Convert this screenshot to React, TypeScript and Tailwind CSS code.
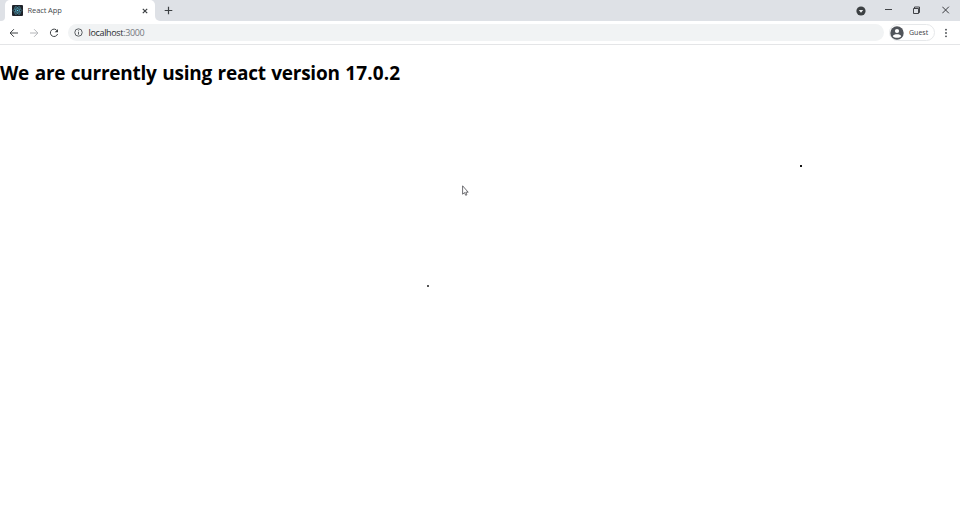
import type { ReactNode } from "react";

function Glyph({ className, size, children }: { className?: string; size: number; children: ReactNode }) {
  return (
    <svg
      className={`block shrink-0 ${className ?? ""}`}
      width={size}
      height={size}
      viewBox={`0 0 ${size} ${size}`}
      fill="none"
      stroke="currentColor"
    >
      {children}
    </svg>
  );
}

function ReactLogo() {
  return (
    <Glyph size={11}>
      <rect width="11" height="11" rx="1" fill="#20232a" stroke="none" />
      <g stroke="#4f9db3" strokeWidth="0.6">
        <ellipse cx="5.5" cy="5.5" rx="4.4" ry="1.7" />
        <ellipse cx="5.5" cy="5.5" rx="4.4" ry="1.7" transform="rotate(60 5.5 5.5)" />
        <ellipse cx="5.5" cy="5.5" rx="4.4" ry="1.7" transform="rotate(120 5.5 5.5)" />
      </g>
      <circle cx="5.5" cy="5.5" r="0.8" fill="#61dafb" stroke="none" />
    </Glyph>
  );
}

function TabStrip() {
  return (
    <div className="flex h-[21px] bg-[#dee1e6]">
      <div className="flex w-[5px] items-end bg-white">
        <div className="h-[21px] w-[5px] rounded-br-[4px] bg-[#dee1e6]" />
      </div>
      <div className="flex bg-[#dee1e6]">
        <div className="flex h-[21px] w-[150px] items-center rounded-t-[5px] bg-white pl-[7px] pr-[7px]">
          <ReactLogo />
          <span className="ml-[4.5px] flex-1 whitespace-nowrap pb-[2px] text-[7.5px] leading-[18px] tracking-[-0.1px] text-[#45494d]">React App</span>
          <Glyph size={6} className="text-[#3c4043]">
            <path d="M.8.8l4.4 4.4M5.2.8L.8 5.2" strokeWidth="1.2" />
          </Glyph>
        </div>
      </div>
      <div className="flex w-[5px] bg-white">
        <div className="h-[21px] w-[5px] rounded-bl-[5px] bg-[#dee1e6]" />
      </div>
      <Glyph size={9} className="ml-1 mt-[6px] text-[#3c4043]">
        <path d="M4.5 .7v7.6M.7 4.5h7.6" strokeWidth="1.2" />
      </Glyph>
      <div className="ml-auto flex h-[20px] items-center pr-[10px] text-[#303236]">
        <Glyph size={10} className="mr-[19px] mt-[1px]">
          <circle cx="5" cy="5" r="4.6" fill="#3c4043" stroke="none" />
          <path d="M2.8 4h4.4L5 6.7z" fill="#eef0f2" stroke="none" />
        </Glyph>
        <Glyph size={8} className="mr-[20px]">
          <path d="M0 3.5h7" strokeWidth="0.9" />
        </Glyph>
        <Glyph size={8} className="mr-[21px]">
          <path d="M.5 2.5h5v5h-5zM1.5 2.5v-1.5H6.5v5.5H5.5" strokeWidth="0.9" />
        </Glyph>
        <Glyph size={8}>
          <path d="M.3.7l6.6 6.6M6.9.7L.3 7.3" strokeWidth="0.95" />
        </Glyph>
      </div>
    </div>
  );
}

function Toolbar() {
  return (
    <div className="flex h-[24px] items-center border-b border-[#e4e5e7] bg-white pl-[9px] pr-[9px]">
      <Glyph size={10} className="mr-[10px] text-[#3c4043]">
        <path d="M9 5H1.2M4.9 1.2L1.1 5l3.8 3.8" strokeWidth="1" />
      </Glyph>
      <Glyph size={10} className="mr-[10px] text-[#b4b6b9]">
        <path d="M1 5h7.8M5.1 1.2L8.9 5 5.1 8.8" strokeWidth="1" />
      </Glyph>
      <Glyph size={10} className="text-[#3c4043]">
        <path d="M8.2 2.8A3.7 3.7 0 1 0 8.6 6" strokeWidth="1" />
        <path d="M9 .9v3.3H5.7z" fill="currentColor" stroke="none" />
      </Glyph>
      <div className="ml-[9px] flex h-[17px] w-[816px] items-center rounded-full bg-[#f1f3f4] pl-[6px]">
        <Glyph size={9} className="text-[#4b4f54]">
          <circle cx="4.5" cy="4.5" r="3.7" strokeWidth="0.9" />
          <path d="M4.5 4v2.6M4.5 2.4v.9" strokeWidth="0.9" />
        </Glyph>
        <span className="ml-[5.5px] text-[9px] leading-[16px] tracking-[-0.34px] text-[#2b2d30]">
          localhost<span className="text-[#75797e]">:3000</span>
        </span>
      </div>
      <div className="ml-[5px] flex h-[17px] w-[46px] items-center rounded-full border border-[#e6e8ea]">
        <Glyph size={14}>
          <circle cx="7" cy="7" r="6.7" fill="#50545a" stroke="none" />
          <circle cx="7" cy="5" r="2.1" fill="#fff" stroke="none" />
          <path d="M2.8 10.2C3.6 7.6 10.4 7.6 11.2 10.2 9.5 12.4 4.5 12.4 2.8 10.2z" fill="#fff" stroke="none" />
        </Glyph>
        <span className="ml-[5px] text-[7px] leading-[14px] text-[#3c4043]">Guest</span>
      </div>
      <Glyph size={10} className="ml-auto text-[#45494d]">
        <g fill="currentColor" stroke="none">
          <circle cx="5" cy="1.7" r="0.9" />
          <circle cx="5" cy="5" r="0.9" />
          <circle cx="5" cy="8.3" r="0.9" />
        </g>
      </Glyph>
    </div>
  );
}

export default function App() {
  return (
    <div className="relative flex h-[515px] w-[960px] flex-col overflow-hidden bg-white font-['Open_Sans','Noto_Sans',sans-serif]">
      <TabStrip />
      <Toolbar />
      <main className="pt-[15px]">
        <h1 className="whitespace-nowrap text-[19px] font-bold leading-[27px] tracking-[-0.25px] [word-spacing:0.9px] text-black">
          We are currently using react version <span className="tracking-[0.1px]">17.0.2</span>
        </h1>
      </main>
      <div className="absolute left-[800px] top-[165px] size-[2px] bg-[#151515]" />
      <div className="absolute left-[427px] top-[285px] size-[2px] bg-[#555]" />
      <svg className="absolute left-[462px] top-[185px]" width="7" height="12" viewBox="0 0 7 12">
        <path d="M.6.8v8.4l1.9-1.6 1.2 2.7 1.2-.5-1.1-2.6h2.4z" fill="#fff" stroke="#4a4a4f" strokeWidth="0.8" />
      </svg>
    </div>
  );
}
